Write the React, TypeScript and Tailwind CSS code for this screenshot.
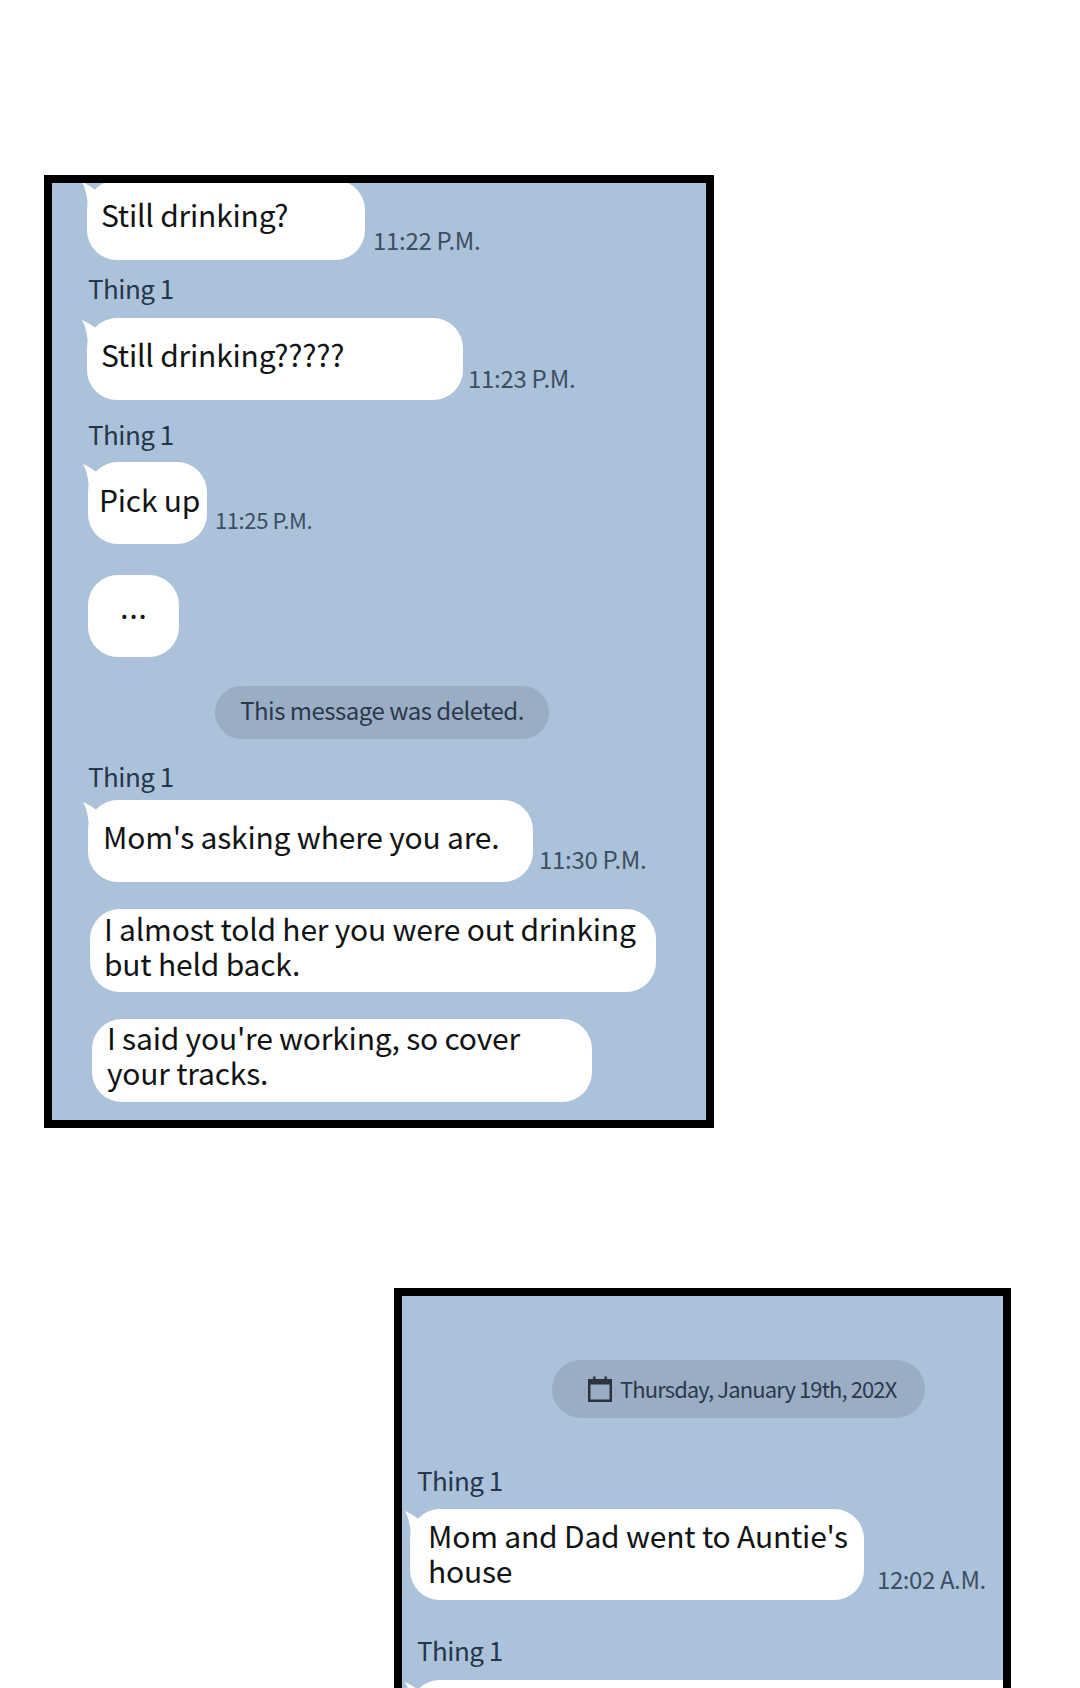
import React from 'react';

const font = "font-['Noto_Sans_CJK_KR','Noto_Sans',sans-serif]";

const Tail = () => (
  <svg className="absolute -left-[5px] top-[1px]" width="32" height="32" viewBox="0 0 32 32">
    <path d="M0 1 C5 3 9 6 12 8 L30 20 L6 31 C6 18 4 8 0 1 Z" fill="#ffffff" />
  </svg>
);

const Label = ({ className }: { className: string }) => (
  <div className={`h-[34px] -translate-y-[1px] text-[26px] leading-[34px] tracking-[-0.5px] text-[#26364a] ${className}`}>Thing 1</div>
);

const Time = ({ text, className }: { text: string; className: string }) => (
  <span className={`whitespace-nowrap text-[#3c4f63] ${className}`}>{text}</span>
);

const Bubble = ({
  className,
  tail,
  children,
}: {
  className: string;
  tail?: boolean;
  children: React.ReactNode;
}) => (
  <div className={`relative flex shrink-0 items-center rounded-[30px] bg-white tracking-[-0.2px] text-[#111315] ${className}`}>
    {tail && <Tail />}
    <div className="relative">{children}</div>
  </div>
);

const CalendarIcon = () => (
  <svg width="24" height="26" viewBox="0 0 24 26" className="shrink-0">
    <path d="M5 0.5 H7.5 V3 H16.5 V0.5 H19 V3 H24 V26 H0 V3 H5 Z M2.5 8.5 V23.5 H21.5 V8.5 Z" fill="#29343f" fillRule="evenodd" />
  </svg>
);

export default function App() {
  return (
    <div className={`h-[1688px] overflow-hidden bg-white pt-[175px] ${font}`}>
      <div className="ml-[44px] h-[953px] w-[670px] overflow-hidden border-8 border-black bg-[#abc2da] pl-[35px]">
        <div className="-mt-[3px] flex items-end gap-[8px]">
          <Bubble tail className="h-[80px] w-[278px] pb-[11px] pl-[14px] text-[30px] leading-[35px]">Still drinking?</Bubble>
          <Time text="11:22 P.M." className="pb-[4px] text-[24px] leading-[32px] tracking-[-0.3px]" />
        </div>

        <Label className="mt-[12px] ml-[1px]" />
        <div className="mt-[12px] flex items-end gap-[5px]">
          <Bubble tail className="h-[82px] w-[376px] pb-[9px] pl-[14px] text-[30px] leading-[35px]">Still drinking?????</Bubble>
          <Time text="11:23 P.M." className="pb-[6px] text-[24px] leading-[32px] tracking-[-0.3px]" />
        </div>

        <Label className="mt-[18px] ml-[1px]" />
        <div className="mt-[10px] flex items-end gap-[8px] pl-[1px]">
          <Bubble tail className="h-[82px] w-[119px] pb-[7px] pl-[11px] text-[30px] leading-[35px]">Pick up</Bubble>
          <Time text="11:25 P.M." className="pb-[10px] text-[22px] leading-[30px] tracking-[-0.4px]" />
        </div>

        <div className="mt-[31px] pl-[1px]">
          <Bubble className="h-[82px] w-[91px] justify-center pb-[14px] pl-[2px] text-[22px] font-bold leading-[30px] tracking-[2px]">...</Bubble>
        </div>

        <div className="mt-[29px] ml-[128px] flex h-[53px] w-[334px] items-center justify-center rounded-[27px] bg-[#9badc4] pb-[6px] text-[24px] tracking-[-0.5px] text-[#2a3a4c]">
          This message was deleted.
        </div>

        <Label className="mt-[21px] ml-[1px]" />
        <div className="mt-[6px] flex items-end gap-[6px] pl-[1px]">
          <Bubble tail className="h-[82px] w-[445px] pb-[9px] pl-[15px] text-[30px] leading-[35px]">Mom's asking where you are.</Bubble>
          <Time text="11:30 P.M." className="pb-[7px] text-[24px] leading-[32px] tracking-[-0.3px]" />
        </div>

        <div className="mt-[27px] pl-[3px]">
          <Bubble className="h-[83px] w-[566px] pb-[10px] pl-[14px] text-[30px] leading-[35px]">
            I almost told her you were out drinking
            <br />
            but held back.
          </Bubble>
        </div>

        <div className="mt-[27px] pl-[5px]">
          <Bubble className="h-[83px] w-[500px] pb-[12px] pl-[15px] text-[30px] leading-[35px]">
            I said you're working, so cover
            <br />
            your tracks.
          </Bubble>
        </div>
      </div>

      <div className="mt-[160px] ml-[394px] h-[420px] w-[617px] overflow-hidden border-8 border-black bg-[#abc2da] pl-[8px]">
        <div className="mt-[64px] ml-[142px] flex h-[58px] w-[373px] items-center gap-[8px] rounded-[29px] bg-[#9badc4] pl-[36px] text-[22px] tracking-[-0.9px] text-[#2a3a4c]">
          <CalendarIcon />
          <span className="-translate-y-[1px] whitespace-nowrap">Thursday, January 19th, 202X</span>
        </div>

        <Label className="mt-[46px] ml-[7px]" />
        <div className="mt-[11px] flex items-end gap-[13px]">
          <Bubble tail className="h-[91px] w-[454px] pb-[4px] pl-[18px] text-[30px] leading-[35px]">
            Mom and Dad went to Auntie's
            <br />
            house
          </Bubble>
          <Time text="12:02 A.M." className="pb-[5px] text-[24px] leading-[32px] tracking-[-0.4px]" />
        </div>

        <Label className="mt-[34px] ml-[7px]" />
        <div className="mt-[12px]">
          <Bubble tail className="h-[91px] w-[640px]"> </Bubble>
        </div>
      </div>
    </div>
  );
}
